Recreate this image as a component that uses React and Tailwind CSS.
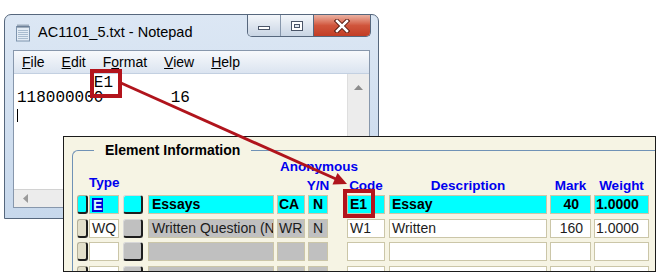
import React from 'react'

const rows = [
  { active: true, type: 'E', desc1: 'Essays', ca: 'CA', yn: 'N', code: 'E1', desc2: 'Essay', mark: '40', weight: '1.0000' },
  { type: 'WQ', desc1: 'Written Question (N', ca: 'WR', yn: 'N', code: 'W1', desc2: 'Written', mark: '160', weight: '1.0000' },
  {},
  {},
]

function NotepadIcon() {
  return (
    <svg width="17" height="18" viewBox="0 0 17 18" className="shrink-0">
      <rect x="1.5" y="2.5" width="13" height="14.5" fill="#e3ecf5" stroke="#7f95ae" />
      {[6, 8, 10, 12, 14].map((y) => (
        <line key={y} x1="3" y1={y + 0.5} x2="13" y2={y + 0.5} stroke="#a9bccf" />
      ))}
      {[3, 5, 7, 9, 11, 13].map((x) => (
        <rect key={x} x={x - 0.5} y="0.5" width="1" height="3.5" fill="#5d6f84" />
      ))}
    </svg>
  )
}

function TitleButtons() {
  return (
    <div className="absolute top-0 right-[7px] flex h-[22px] rounded-b-[5px] border border-t-0 border-[#56677d] overflow-hidden">
      <div className="w-[33px] flex items-end justify-center pb-[6px] bg-gradient-to-b from-[#f3f6fa] to-[#c9d5e4] border-r border-[#8696ab]">
        <div className="w-[12px] h-[4px] bg-white border border-[#4a5568]" />
      </div>
      <div className="w-[33px] flex items-center justify-center bg-gradient-to-b from-[#f3f6fa] to-[#c9d5e4] border-r border-[#56677d]">
        <div className="w-[12px] h-[10px] border border-[#4a5568] bg-white p-[2px]">
          <div className="w-full h-full border border-[#4a5568] bg-[#dfe6ef]" />
        </div>
      </div>
      <div className="w-[56px] flex items-center justify-center bg-gradient-to-b from-[#eab1a2] via-[#d0553c] to-[#c23d25]">
        <svg width="16" height="14" viewBox="0 0 16 14">
          <path d="M3 2 L13 12 M13 2 L3 12" stroke="#5a1e14" strokeWidth="4.5" strokeLinecap="square" />
          <path d="M3 2 L13 12 M13 2 L3 12" stroke="#ffffff" strokeWidth="2.5" strokeLinecap="square" />
        </svg>
      </div>
    </div>
  )
}

function Notepad() {
  const menu = [
    ['F', 'ile'],
    ['E', 'dit'],
    ['F', 'o', 'rmat'],
    ['V', 'iew'],
    ['H', 'elp'],
  ]
  return (
    <div className="absolute left-[4px] top-[14px] w-[375px] h-[205px] rounded-t-[7px] border border-[#56677d] bg-gradient-to-b from-[#dce7f4] to-[#c7d8ec] flex flex-col">
      <div className="relative h-[35px] shrink-0 flex items-center pl-[10px]">
        <NotepadIcon />
        <span className="ml-[6px] text-[14.5px] text-black">AC1101_5.txt - Notepad</span>
        <TitleButtons />
      </div>
      <div className="mx-[8px] mb-[10px] flex-1 min-h-0 flex flex-col border border-[#8797ac] bg-white">
        <div className="h-[23px] shrink-0 flex items-center gap-[17px] pl-[8px] text-[14px] text-black bg-gradient-to-b from-[#f7f9fc] to-[#dbe4f0] border-b border-[#c3d0e1]">
          {menu.map((m, i) => (
            <span key={i}>
              {m.length === 2 ? (
                <>
                  <span className="underline">{m[0]}</span>
                  {m[1]}
                </>
              ) : (
                <>
                  {m[0]}
                  <span className="underline">{m[1]}</span>
                  {m[2]}
                </>
              )}
            </span>
          ))}
        </div>
        <div className="flex-1 min-h-0 flex">
          <div className="flex-1 pl-[3px] pt-[2px] font-['Liberation_Mono',monospace] text-[16px] leading-[15px] text-black whitespace-pre">
            <div>{'        E1'}</div>
            <div>{'118000000       16'}</div>
            <div className="mt-[3px] w-[1px] h-[13px] bg-black" />
          </div>
          <div className="w-[22px] bg-[#ececec] border-l border-[#dedede] flex justify-center pt-[11px]">
            <svg width="9" height="5" viewBox="0 0 9 5">
              <path d="M0 5 L4.5 0 L9 5 Z" fill="#8c8c8c" />
            </svg>
          </div>
        </div>
        <div className="h-[18px] shrink-0 bg-[#ececec] border-t border-[#d2d2d2] flex items-center pl-[9px]">
          <svg width="5" height="9" viewBox="0 0 5 9">
            <path d="M5 0 L0 4.5 L5 9 Z" fill="#9a9a9a" />
          </svg>
        </div>
      </div>
    </div>
  )
}

const cellBase = 'h-full shrink-0 border border-[#cbc6a8] flex items-center overflow-hidden whitespace-nowrap'

function Cell({ w, ml, bg, children, className = '' }) {
  return <div className={`${cellBase} ${w} ${ml} ${bg} ${className}`}>{children}</div>
}

function Row({ r }) {
  const a = r.active
  const txt = a ? 'font-bold text-black' : 'font-normal text-[#1c1c1c]'
  const white = a ? 'bg-[#00ffff]' : 'bg-white'
  const gray = a ? 'bg-[#00ffff]' : 'bg-[#c0c0c0]'
  return (
    <div className={`flex h-[19px] text-[14px] leading-[17px] ${txt}`}>
      <div className={`w-[11px] h-full shrink-0 rounded-[3px] border border-[#b4b09a] border-r-2 border-b-2 border-r-[#1e1e1e] border-b-[#1e1e1e] ${a ? 'bg-[#00ffff]' : 'bg-[#e3e0cb]'}`} />
      <Cell w="w-[30px]" ml="ml-[1px]" bg={white} className="pl-[2px]">
        {a ? <span className="inline-block bg-[#0000d8] text-[#d8ffff] leading-[14px] px-[1px]">{r.type}</span> : r.type}
      </Cell>
      <div className={`w-[20px] h-full ml-[4px] shrink-0 rounded-[3px] border border-[#d8d8d8] border-r-2 border-b-2 border-r-[#1e1e1e] border-b-[#1e1e1e] ${gray}`} />
      <Cell w="w-[126px]" ml="ml-[5px]" bg={gray} className="pl-[3px]">{r.desc1}</Cell>
      <Cell w="w-[28px]" ml="ml-[3px]" bg={gray} className="pl-[1px]">{r.ca}</Cell>
      <Cell w="w-[20px]" ml="ml-[3px]" bg={gray} className="pl-[4px]">{r.yn}</Cell>
      <Cell w="w-[38px]" ml="ml-[19px]" bg={white} className="pl-[2px]">{r.code}</Cell>
      <Cell w="w-[158px]" ml="ml-[4px]" bg={white} className="pl-[2px]">{r.desc2}</Cell>
      <Cell w="w-[41px]" ml="ml-[3px]" bg={white} className={`justify-end ${a ? 'pr-[11px]' : 'pr-[7px]'}`}>{r.mark}</Cell>
      <Cell w="w-[55px]" ml="ml-[3px]" bg={white} className="pl-[1px]">{r.weight}</Cell>
    </div>
  )
}

function FormPanel() {
  return (
    <div className="absolute left-[63px] top-[136px] w-[593px] h-[136px] border border-[#1b1b1b] bg-[#f6f4e4] overflow-hidden">
      <div className="relative ml-[8px] mt-[13px] h-[200px] rounded-tl-[6px] border-l border-t border-[#7092b6]">
        <span className="absolute -top-[10px] left-[21px] px-[11px] bg-[#f6f4e4] text-[14px] font-bold leading-[18px] text-black">
          Element Information
        </span>
        <div className="pt-[8px] pl-[4px] text-[13.5px] font-bold text-[#0000ee]">
          <div className="h-[16px] leading-[16px] pl-[203px]">Anonymous</div>
          <div className="flex items-end h-[19px] leading-[16px]">
            <div className="w-[11px] shrink-0" />
            <div className="w-[30px] ml-[1px] shrink-0 pb-[3px]">Type</div>
            <div className="w-[20px] ml-[4px] shrink-0" />
            <div className="w-[126px] ml-[5px] shrink-0" />
            <div className="w-[28px] ml-[3px] shrink-0" />
            <div className="w-[20px] ml-[3px] shrink-0 flex justify-center whitespace-nowrap">Y/N</div>
            <div className="w-[38px] ml-[19px] shrink-0 text-center">Code</div>
            <div className="w-[158px] ml-[4px] shrink-0 text-center">Description</div>
            <div className="w-[41px] ml-[3px] shrink-0 text-center">Mark</div>
            <div className="w-[55px] ml-[3px] shrink-0 text-center">Weight</div>
          </div>
          <div className="mt-[1px] flex flex-col gap-[4.5px]">
            {rows.map((r, i) => (
              <Row key={i} r={r} />
            ))}
          </div>
        </div>
      </div>
    </div>
  )
}

function Arrow() {
  return (
    <svg className="absolute inset-0 pointer-events-none" width="658" height="274" viewBox="0 0 658 274">
      <line x1="121" y1="83" x2="336" y2="179" stroke="#b0141c" strokeWidth="3" />
      <polygon points="347,184 337.5,173 332.5,184.5" fill="#b0141c" />
    </svg>
  )
}

export default function App() {
  return (
    <div className="relative w-[658px] h-[274px] overflow-hidden bg-white font-['Liberation_Sans',Arial,sans-serif]">
      <Notepad />
      <FormPanel />
      <div className="absolute left-[90px] top-[69px] w-[32px] h-[29px] border-4 border-[#b3141c]" />
      <div className="absolute left-[343px] top-[189px] w-[32px] h-[29px] border-4 border-[#b3141c]" />
      <Arrow />
    </div>
  )
}
